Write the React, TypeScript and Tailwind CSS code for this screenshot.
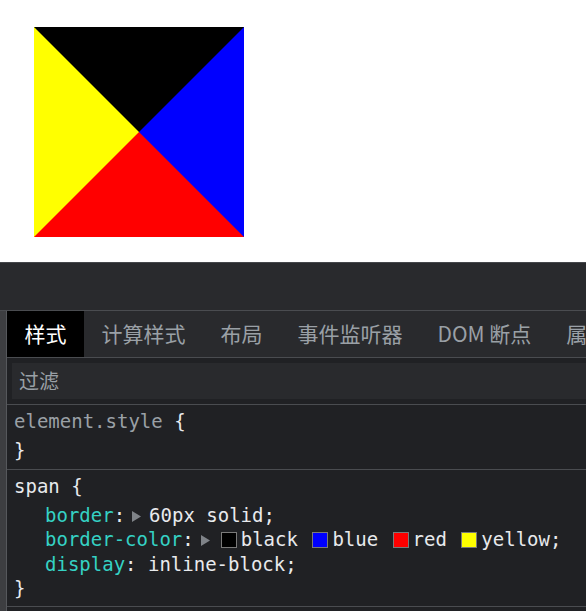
import { ReactNode } from 'react';

const mono = { fontFamily: '"DejaVu Sans Mono", "Liberation Mono", monospace' };
const cjk = { fontFamily: '"Noto Sans CJK SC", "Noto Sans", sans-serif' };

const tabs = ['样式', '计算样式', '布局', '事件监听器', 'DOM 断点', '属性'];

function Arrow() {
  return (
    <span className="inline-flex items-center ml-[7px] mr-[8px] align-middle">
      <svg width="9" height="11" viewBox="0 0 9 11">
        <polygon points="0,0 9,5.5 0,11" fill="#7f8388" />
      </svg>
    </span>
  );
}

function Swatch({ color }: { color: string }) {
  return (
    <span
      className={`inline-block w-[16px] h-[16px] border border-[#7a7a7a] ml-[3px] mr-[4px] align-middle relative -top-[1px] ${color}`}
    />
  );
}

function Decl({ name, children }: { name: string; children: ReactNode }) {
  return (
    <div className="pl-[38px] h-[24.5px] leading-[24.5px] whitespace-nowrap">
      <span className="text-[#35d2c4]">{name}</span>
      <span className="text-[#e8eaed]">:</span>
      {children}
    </div>
  );
}

export default function App() {
  return (
    <div className="w-[586px] h-[611px] overflow-hidden bg-white">
      {/* rendered element */}
      <div className="h-[262px] pl-[34px] pt-[27px]">
        <span className="inline-block border-[105px] border-solid border-t-black border-r-[#0000ff] border-b-[#ff0000] border-l-[#ffff00]" />
      </div>

      {/* devtools */}
      <div className="h-[349px] flex flex-col bg-[#292a2d] border-t border-[#45474b]">
        <div className="h-[47px] shrink-0" />
        <div className="flex flex-1 min-h-0 border-t border-[#4a4c50]">
          <div className="w-[7px] shrink-0 bg-[#3d3e41] border-r border-[#56585c]" />
          <div className="flex-1 min-w-0 flex flex-col bg-[#202124]">
            {/* tabs */}
            <div className="h-[47px] shrink-0 flex overflow-hidden bg-[#292a2d] border-b border-[#4a4c50] text-[21px] whitespace-nowrap" style={cjk}>
              {tabs.map((t, i) => (
                <div
                  key={t}
                  className={`px-[17.5px] shrink-0 flex items-center ${i === 0 ? 'bg-black text-white' : 'text-[#9aa0a6]'}`}
                >
                  {t}
                </div>
              ))}
            </div>

            {/* filter */}
            <div className="h-[47px] shrink-0 pl-[5px] py-[5px] border-b border-[#4a4c50]">
              <div className="h-full bg-[#292a2d] pl-[7px] flex items-center text-[20px] text-[#9aa0a6]" style={cjk}>
                过滤
              </div>
            </div>

            {/* element.style */}
            <div className="pt-[4px] pb-[7px] border-b border-[#4a4c50] text-[19px]" style={mono}>
              <div className="pl-[7px] h-[28.5px] leading-[24.5px]">
                <span className="text-[#9aa0a6]">element.style</span>
                <span className="text-[#e8eaed]"> {'{'}</span>
              </div>
              <div className="pl-[7px] h-[24.5px] leading-[24.5px] text-[#e8eaed]">{'}'}</div>
            </div>

            {/* span rule */}
            <div className="pt-[4px] pb-[5px] border-b border-[#4a4c50] text-[19px] text-[#e8eaed]" style={mono}>
              <div className="pl-[7px] h-[28.5px] leading-[24.5px]">span {'{'}</div>
              <Decl name="border">
                <Arrow />
                60px solid;
              </Decl>
              <Decl name="border-color">
                <Arrow />
                <Swatch color="bg-black" />
                black <Swatch color="bg-[#0000ff]" />
                blue <Swatch color="bg-[#ff0000]" />
                red <Swatch color="bg-[#ffff00]" />
                yellow;
              </Decl>
              <Decl name="display">
                {' '}inline-block;
              </Decl>
              <div className="pl-[7px] h-[24.5px] leading-[24.5px]">{'}'}</div>
            </div>
          </div>
        </div>
      </div>
    </div>
  );
}
